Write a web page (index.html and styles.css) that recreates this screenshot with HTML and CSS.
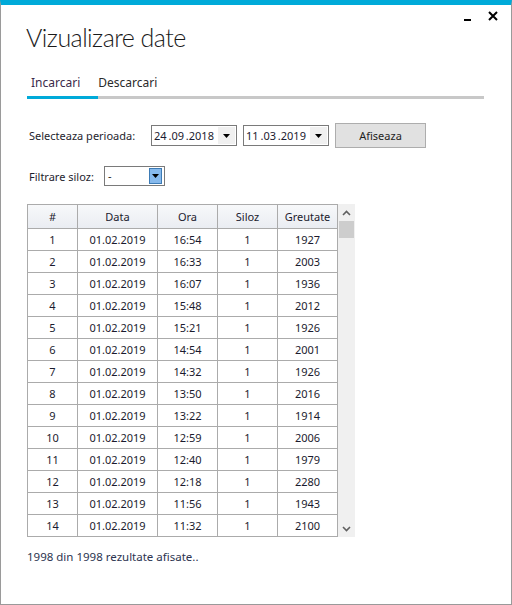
FILE: index.html
```html
<!DOCTYPE html>
<html lang="ro">
<head>
<meta charset="utf-8">
<title>Vizualizare date</title>
<link rel="stylesheet" href="styles.css">
</head>
<body>
<div class="window">
  <div class="caption">
    <button class="cap-btn min" aria-label="Minimizare">
      <svg width="8" height="10" viewBox="0 0 8 10"><rect x="0" y="8" width="7" height="2" fill="#000"/></svg>
    </button>
    <button class="cap-btn close" aria-label="Inchidere">
      <svg width="10" height="10" viewBox="0 0 10 10"><path d="M1 1 L9 9 M9 1 L1 9" stroke="#000" stroke-width="2" fill="none"/></svg>
    </button>
  </div>
  <div class="content">
    <h1 class="title">Vizualizare date</h1>
    <div class="tabs">
      <span class="tab active">Incarcari</span>
      <span class="tab">Descarcari</span>
    </div>
    <div class="period-row">
      <span class="label period-label">Selecteaza perioada:</span>
      <div class="datepicker">
        <span class="dp-text">24 .09 .2018</span>
        <span class="dp-drop"><svg width="7" height="4" viewBox="0 0 7 4"><path d="M0 0 H7 L3.5 4 Z" fill="#000"/></svg></span>
      </div>
      <div class="datepicker">
        <span class="dp-text">11 .03 .2019</span>
        <span class="dp-drop"><svg width="7" height="4" viewBox="0 0 7 4"><path d="M0 0 H7 L3.5 4 Z" fill="#000"/></svg></span>
      </div>
      <button class="btn">Afiseaza</button>
    </div>
    <div class="filter-row">
      <span class="label filter-label">Filtrare siloz:</span>
      <div class="combo">
        <span class="combo-text">-</span>
        <span class="combo-drop"><svg width="7" height="4" viewBox="0 0 7 4"><path d="M0 0 H7 L3.5 4 Z" fill="#000"/></svg></span>
      </div>
    </div>
    <div class="grid-wrap">
      <table class="grid">
        <colgroup>
          <col class="c-nr"><col class="c-data"><col class="c-ora"><col class="c-siloz"><col class="c-gr">
        </colgroup>
        <thead>
          <tr><th>#</th><th>Data</th><th>Ora</th><th>Siloz</th><th>Greutate</th></tr>
        </thead>
        <tbody>
          <tr><td>1</td><td>01.02.2019</td><td>16:54</td><td>1</td><td>1927</td></tr>
          <tr><td>2</td><td>01.02.2019</td><td>16:33</td><td>1</td><td>2003</td></tr>
          <tr><td>3</td><td>01.02.2019</td><td>16:07</td><td>1</td><td>1936</td></tr>
          <tr><td>4</td><td>01.02.2019</td><td>15:48</td><td>1</td><td>2012</td></tr>
          <tr><td>5</td><td>01.02.2019</td><td>15:21</td><td>1</td><td>1926</td></tr>
          <tr><td>6</td><td>01.02.2019</td><td>14:54</td><td>1</td><td>2001</td></tr>
          <tr><td>7</td><td>01.02.2019</td><td>14:32</td><td>1</td><td>1926</td></tr>
          <tr><td>8</td><td>01.02.2019</td><td>13:50</td><td>1</td><td>2016</td></tr>
          <tr><td>9</td><td>01.02.2019</td><td>13:22</td><td>1</td><td>1914</td></tr>
          <tr><td>10</td><td>01.02.2019</td><td>12:59</td><td>1</td><td>2006</td></tr>
          <tr><td>11</td><td>01.02.2019</td><td>12:40</td><td>1</td><td>1979</td></tr>
          <tr><td>12</td><td>01.02.2019</td><td>12:18</td><td>1</td><td>2280</td></tr>
          <tr><td>13</td><td>01.02.2019</td><td>11:56</td><td>1</td><td>1943</td></tr>
          <tr><td>14</td><td>01.02.2019</td><td>11:32</td><td>1</td><td>2100</td></tr>
        </tbody>
      </table>
      <div class="scrollbar">
        <span class="sb-arrow"><svg width="9" height="6" viewBox="0 0 9 6"><path d="M1 5 L4.5 1.5 L8 5" stroke="#606060" stroke-width="1.6" fill="none"/></svg></span>
        <span class="sb-thumb"></span>
        <span class="sb-track"></span>
        <span class="sb-arrow"><svg width="9" height="6" viewBox="0 0 9 6"><path d="M1 1 L4.5 4.5 L8 1" stroke="#606060" stroke-width="1.6" fill="none"/></svg></span>
      </div>
    </div>
    <p class="status">1998 din 1998 rezultate afisate..</p>
  </div>
</div>
</body>
</html>
```

FILE: styles.css
```css
* { box-sizing: border-box; }

html, body {
  margin: 0;
  padding: 0;
  background: #ffffff;
}

body {
  font-family: "Segoe UI", "Noto Sans", "Open Sans", sans-serif;
  font-size: 11px;
  color: #1e1e1e;
}

.window {
  width: 512px;
  height: 605px;
  border-top: 5px solid #00aad9;
  border-left: 1px solid #9a9a9a;
  border-right: 1px solid #9a9a9a;
  border-bottom: 1px solid #9a9a9a;
  background: #ffffff;
}

.caption {
  display: flex;
  justify-content: flex-end;
  align-items: flex-start;
  height: 16px;
  padding-top: 6px;
  padding-right: 13px;
  gap: 16px;
}

.cap-btn {
  border: 0;
  padding: 0;
  margin: 0;
  background: transparent;
  display: flex;
  line-height: 0;
}

.content {
  padding-left: 26px;
}

.title {
  margin: 0 0 0 -1px;
  font-family: "Segoe UI Light", "Lato", "Open Sans", sans-serif;
  font-weight: 300;
  font-size: 25px;
  letter-spacing: -0.55px;
  line-height: 32px;
  color: #1a1a1a;
}

.tabs {
  display: flex;
  width: 457px;
  margin-top: 20px;
  border-bottom: 3px solid #c8c8c8;
}

.tab {
  font-size: 12px;
  line-height: 19px;
  padding: 0 18px 4px 4px;
  margin-bottom: -3px;
  border-bottom: 3px solid transparent;
  color: #2a2a2a;
  white-space: nowrap;
}

.tab.active {
  border-bottom-color: #00aad9;
  color: #3a2a4a;
}

.tab + .tab {
  padding-left: 0;
}

.period-row {
  display: flex;
  align-items: center;
  height: 25px;
  margin-top: 24px;
}

.label {
  color: #1e1e2e;
  white-space: nowrap;
}

.period-label {
  margin-left: 2px;
  width: 122px;
}

.datepicker {
  display: flex;
  align-items: stretch;
  width: 86px;
  height: 21px;
  border: 1px solid #7a7a7a;
  background: #ffffff;
  margin-right: 6px;
  padding: 1px;
}

.dp-text {
  flex: 1;
  min-width: 0;
  overflow: hidden;
  padding-left: 1px;
  line-height: 17px;
  color: #1b1b30;
  white-space: nowrap;
  font-size: 11px;
  word-spacing: -1px;
}

.dp-drop {
  flex: 0 0 17px;
  background: #f0f0f0;
  display: flex;
  align-items: center;
  justify-content: center;
}

.btn {
  width: 91px;
  height: 25px;
  border: 1px solid #adadad;
  background: #e1e1e1;
  font-family: inherit;
  font-size: 11px;
  color: #1e1e1e;
  padding: 0;
}

.filter-row {
  display: flex;
  align-items: center;
  height: 20px;
  margin-top: 18px;
}

.filter-label {
  margin-left: 2px;
  width: 75px;
}

.combo {
  display: flex;
  align-items: stretch;
  width: 61px;
  height: 20px;
  border: 1px solid #7a7a7a;
  background: #ffffff;
  padding: 1px 2px 1px 1px;
}

.combo-text {
  flex: 1;
  padding-left: 2px;
  line-height: 16px;
}

.combo-drop {
  width: 13px;
  background: #86b9ec;
  border: 1px solid #3d7bb5;
  display: flex;
  align-items: center;
  justify-content: center;
}

.grid-wrap {
  display: flex;
  align-items: stretch;
  margin-top: 18px;
}

.grid {
  border-collapse: separate;
  border-spacing: 0;
  table-layout: fixed;
  width: 311px;
  border-left: 1px solid #ababab;
  border-top: 1px solid #ababab;
}

.c-nr { width: 50px; }
.c-data { width: 80px; }
.c-ora { width: 60px; }
.c-siloz { width: 60px; }
.c-gr { width: 60px; }

.grid th,
.grid td {
  border-right: 1px solid #ababab;
  border-bottom: 1px solid #ababab;
  text-align: center;
  padding: 0;
  font-weight: normal;
  color: #1b1b2e;
  font-size: 11px;
}

.grid th {
  height: 24px;
  background: linear-gradient(#f7f8fa, #eaedf2);
}

.grid td {
  height: 22px;
}

.scrollbar {
  width: 17px;
  background: #f0f0f0;
  display: flex;
  flex-direction: column;
  align-items: center;
}

.sb-arrow {
  height: 17px;
  display: flex;
  align-items: center;
  justify-content: center;
}

.sb-thumb {
  width: 15px;
  height: 17px;
  background: #cdcdcd;
}

.sb-track {
  flex: 1;
}

.status {
  margin: 12px 0 0 0;
  line-height: 16px;
  font-size: 11.5px;
  color: #2c3450;
}
```
